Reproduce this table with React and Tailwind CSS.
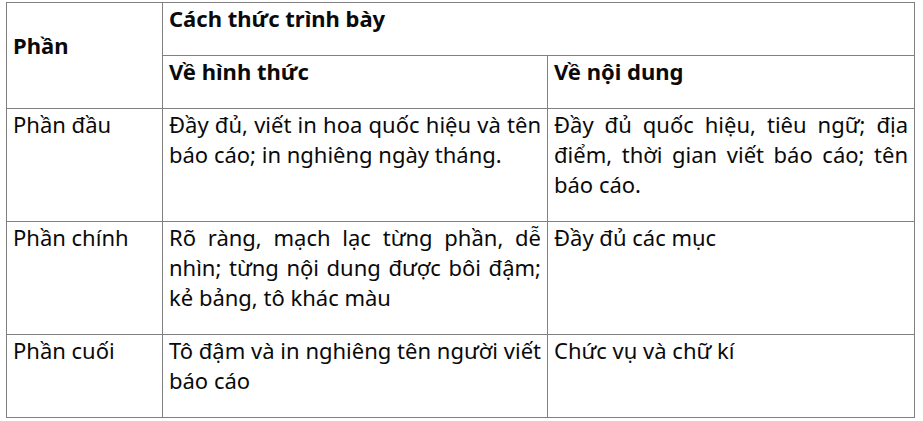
const cellClass =
  "border border-[#808080] px-[6px] pt-0 pb-[22px] align-top text-justify";
const headClass =
  "border border-[#808080] px-[6px] pt-0 pb-[22px] align-top text-left font-bold";

const rows = [
  {
    part: "Phần đầu",
    form: "Đầy đủ, viết in hoa quốc hiệu và tên báo cáo; in nghiêng ngày tháng.",
    content: "Đầy đủ quốc hiệu, tiêu ngữ; địa điểm, thời gian viết báo cáo; tên báo cáo.",
  },
  {
    part: "Phần chính",
    form: "Rõ ràng, mạch lạc từng phần, dễ nhìn; từng nội dung được bôi đậm; kẻ bảng, tô khác màu",
    content: "Đầy đủ các mục",
  },
  {
    part: "Phần cuối",
    form: "Tô đậm và in nghiêng tên người viết báo cáo",
    content: "Chức vụ và chữ kí",
  },
];

export default function App() {
  return (
    <div
      className="min-h-[421px] bg-white pl-[6px] pt-[2px] text-[22px] leading-[30px] text-[#0a0a0a]"
      style={{ fontFamily: '"Noto Sans", "Open Sans", sans-serif' }}
    >
      <table className="w-[908px] table-fixed border-collapse">
        <colgroup>
          <col className="w-[156px]" />
          <col className="w-[385px]" />
          <col className="w-[367px]" />
        </colgroup>
        <thead>
          <tr>
            <th rowSpan={2} className={`${headClass} !align-middle`}>
              Phần
            </th>
            <th colSpan={2} className={headClass}>
              Cách thức trình bày
            </th>
          </tr>
          <tr>
            <th className={headClass}>Về hình thức</th>
            <th className={headClass}>Về nội dung</th>
          </tr>
        </thead>
        <tbody>
          {rows.map((row) => (
            <tr key={row.part}>
              <td className={cellClass}>{row.part}</td>
              <td className={cellClass}>{row.form}</td>
              <td className={cellClass}>{row.content}</td>
            </tr>
          ))}
        </tbody>
      </table>
    </div>
  );
}
